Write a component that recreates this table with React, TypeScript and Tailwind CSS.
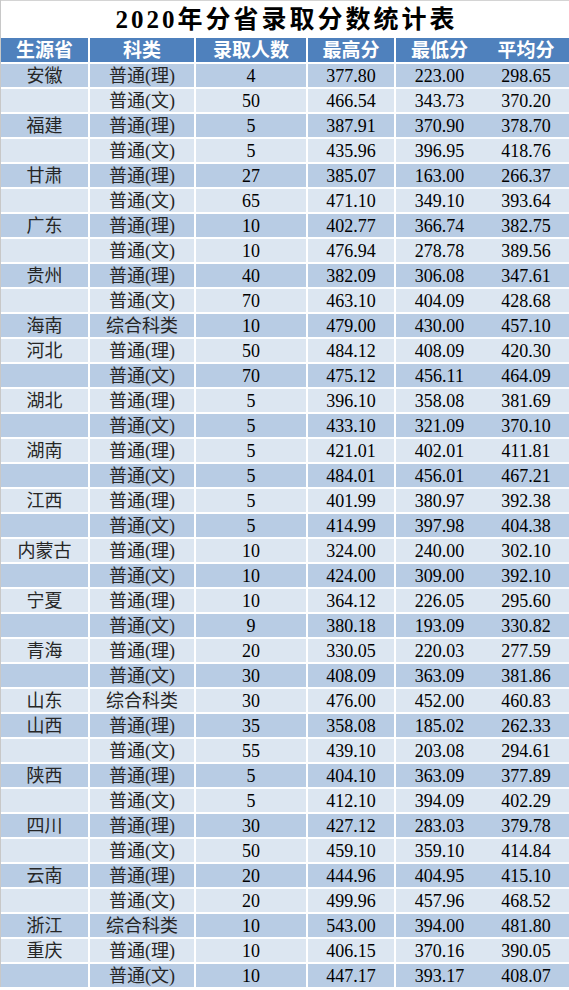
import React from "react";

type Row = [string, string, string, string, string, string];

const rows: Row[] = [
    ["安徽", "普通(理)", "4", "377.80", "223.00", "298.65"],
    ["", "普通(文)", "50", "466.54", "343.73", "370.20"],
    ["福建", "普通(理)", "5", "387.91", "370.90", "378.70"],
    ["", "普通(文)", "5", "435.96", "396.95", "418.76"],
    ["甘肃", "普通(理)", "27", "385.07", "163.00", "266.37"],
    ["", "普通(文)", "65", "471.10", "349.10", "393.64"],
    ["广东", "普通(理)", "10", "402.77", "366.74", "382.75"],
    ["", "普通(文)", "10", "476.94", "278.78", "389.56"],
    ["贵州", "普通(理)", "40", "382.09", "306.08", "347.61"],
    ["", "普通(文)", "70", "463.10", "404.09", "428.68"],
    ["海南", "综合科类", "10", "479.00", "430.00", "457.10"],
    ["河北", "普通(理)", "50", "484.12", "408.09", "420.30"],
    ["", "普通(文)", "70", "475.12", "456.11", "464.09"],
    ["湖北", "普通(理)", "5", "396.10", "358.08", "381.69"],
    ["", "普通(文)", "5", "433.10", "321.09", "370.10"],
    ["湖南", "普通(理)", "5", "421.01", "402.01", "411.81"],
    ["", "普通(文)", "5", "484.01", "456.01", "467.21"],
    ["江西", "普通(理)", "5", "401.99", "380.97", "392.38"],
    ["", "普通(文)", "5", "414.99", "397.98", "404.38"],
    ["内蒙古", "普通(理)", "10", "324.00", "240.00", "302.10"],
    ["", "普通(文)", "10", "424.00", "309.00", "392.10"],
    ["宁夏", "普通(理)", "10", "364.12", "226.05", "295.60"],
    ["", "普通(文)", "9", "380.18", "193.09", "330.82"],
    ["青海", "普通(理)", "20", "330.05", "220.03", "277.59"],
    ["", "普通(文)", "30", "408.09", "363.09", "381.86"],
    ["山东", "综合科类", "30", "476.00", "452.00", "460.83"],
    ["山西", "普通(理)", "35", "358.08", "185.02", "262.33"],
    ["", "普通(文)", "55", "439.10", "203.08", "294.61"],
    ["陕西", "普通(理)", "5", "404.10", "363.09", "377.89"],
    ["", "普通(文)", "5", "412.10", "394.09", "402.29"],
    ["四川", "普通(理)", "30", "427.12", "283.03", "379.78"],
    ["", "普通(文)", "50", "459.10", "359.10", "414.84"],
    ["云南", "普通(理)", "20", "444.96", "404.95", "415.10"],
    ["", "普通(文)", "20", "499.96", "457.96", "468.52"],
    ["浙江", "综合科类", "10", "543.00", "394.00", "481.80"],
    ["重庆", "普通(理)", "10", "406.15", "370.16", "390.05"],
    ["", "普通(文)", "10", "447.17", "393.17", "408.07"],
];

const headers = ["生源省", "科类", "录取人数", "最高分", "最低分", "平均分"];

// column widths + whether a white rule sits on the left
const cols = [
    "w-[87px]",
    "w-[106px] border-l-2 border-white",
    "w-[112px] border-l-2 border-white",
    "w-[88px] border-l-2 border-white",
    "w-[89px] border-l-2 border-white",
    "flex-1",
];

const App = () => {
    return (
        <div className="w-[569px] bg-white border-l border-[#c8c8c8] font-['Liberation_Serif','Noto_Sans_CJK_SC',serif] overflow-hidden">
            <div className="h-[38px] border-t border-[#d4d4d4] flex items-center justify-center">
                <h1 className="text-[25px] font-bold tracking-[3px] text-black leading-none pl-[3px]">
                    2020年分省录取分数统计表
                </h1>
            </div>

            <div className="flex h-[24px] bg-[#4f81bd] text-white text-[19px] font-bold">
                {headers.map((h, i) => (
                    <div key={i} className={`${cols[i]} flex items-center justify-center leading-none`}>
                        {h}
                    </div>
                ))}
            </div>

            {rows.map((r, ri) => (
                <div
                    key={ri}
                    className={`flex h-[25px] border-t-2 border-white text-[18px] ${ri % 2 === 0 ? 'bg-[#b8cce4]' : 'bg-[#dce6f1]'}`}
                >
                    {r.map((v, ci) => (
                        <div
                            key={ci}
                            className={`${cols[ci]} flex items-center justify-center leading-none ${ci < 2 ? 'text-[#262626]' : 'text-black'}`}
                        >
                            {v}
                        </div>
                    ))}
                </div>
            ))}
        </div>
    )
}

export default App
